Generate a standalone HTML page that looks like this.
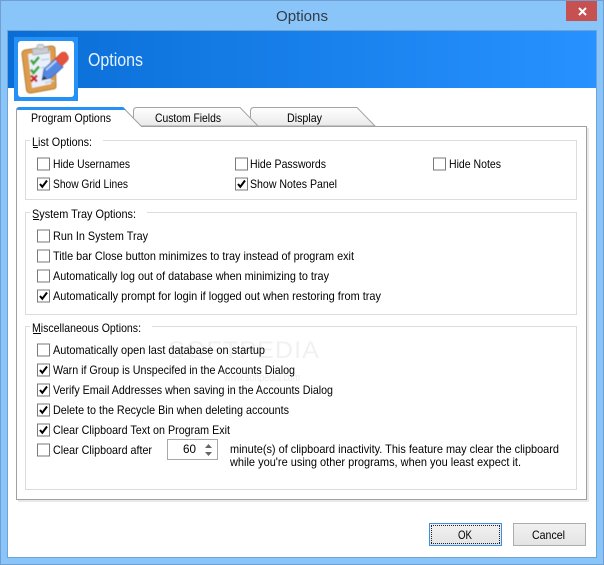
<!DOCTYPE html>
<html><head><meta charset="utf-8"><title>Options</title>
<style>
html,body{margin:0;padding:0;width:604px;height:565px;overflow:hidden;background:#8ac5fa}
svg{display:block;position:absolute;left:0;top:0}
text{font-family:"Liberation Sans",sans-serif;font-size:12px;fill:#000}
</style></head><body>
<svg width="604" height="565" viewBox="0 0 604 565" xmlns="http://www.w3.org/2000/svg">
<defs>
<linearGradient id="hd" x1="0" x2="1" y1="0" y2="0"><stop offset="0" stop-color="#096dd5"/><stop offset="1" stop-color="#2792ff"/></linearGradient>
<linearGradient id="tab" x1="0" x2="0" y1="0" y2="1"><stop offset="0" stop-color="#ffffff"/><stop offset="1" stop-color="#e9e9e9"/></linearGradient>
<linearGradient id="btn" x1="0" x2="0" y1="0" y2="1"><stop offset="0" stop-color="#f1f1f1"/><stop offset="1" stop-color="#e4e4e4"/></linearGradient>
<filter id="soft" x="-5%" y="-5%" width="110%" height="110%"><feGaussianBlur stdDeviation="0.45"/></filter>
<g id="cb"><rect x="0.5" y="0.5" width="12" height="12" fill="#fff" stroke="#7a7a7a"/></g>
<g id="ck"><rect x="0.5" y="0.5" width="12" height="12" fill="#fff" stroke="#7a7a7a"/><path d="M3 6.500L5.300 9.300L10 3" fill="none" stroke="#000" stroke-width="2"/></g>
</defs>
<!-- window -->
<rect x="0.5" y="0.5" width="603" height="564" fill="#8ac5fa" stroke="#6f9fd0"/>
<rect x="7" y="30" width="590" height="528" fill="#6ea3d6"/>
<rect x="8" y="31" width="588" height="526" fill="#fff"/>
<text x="276" y="21" style="font-size:15px;fill:#333b45" textLength="52" lengthAdjust="spacingAndGlyphs">Options</text>
<rect x="566" y="1" width="31" height="20" fill="#c75050"/>
<path d="M579 8l7 7M586 8l-7 7" stroke="#fff" stroke-width="2" fill="none"/>
<!-- header -->
<rect x="8" y="31" width="588" height="57" fill="url(#hd)"/>
<rect x="14" y="37" width="64" height="64" fill="#2590f5"/>
<rect x="18" y="41" width="56" height="56" rx="3" fill="#fff"/>
<!-- icon -->
<g filter="url(#soft)">
<path d="M25 50L51 46Q55 46 55 49L56 86Q56 89 53 89L31 93Q27 93 26.500 90L22 54Q22 51 25 50Z" fill="#dd9c48" stroke="#b57a30" stroke-width="1"/>
<path d="M28 54L50 51L51 84L32 88Z" fill="#e9f0fb"/>
<path d="M32 49L48 47L49 53L33 55Z" fill="#c9ccd1" stroke="#9a9ea5" stroke-width=".7"/>
<rect x="37" y="44.500" width="7" height="4.500" rx="2" fill="#d6d8dc" stroke="#9a9ea5" stroke-width=".7"/>
<path d="M31 60L33.500 63.500L39 57" fill="none" stroke="#3da83a" stroke-width="2.600"/>
<path d="M31 69.500L33.500 73L39 66.500" fill="none" stroke="#3da83a" stroke-width="2.600"/>
<path d="M31 75.500L37 81.500M37 75.500L31 81.500" fill="none" stroke="#c9282a" stroke-width="2.400"/>
<path d="M41 60L49 59M41 68L45 67" stroke="#a9c0e6" stroke-width="1"/>
<path d="M44 69L55 59L63 67L51 78L42 80Z" fill="#5287e0" stroke="#2f5fb0" stroke-width=".8"/>
<path d="M46 70L57 60" stroke="#b4d0f8" stroke-width="2"/>
<path d="M44 76L42 80L47 79Z" fill="#333"/>
<path d="M44 82L52 80L55 81L46 84Z" fill="#cfd6e2"/>
<path d="M55 59L61 53Q64 51 66 53L68 56Q69 59 67 61L62 66Z" fill="#e6533c" stroke="#c23a25" stroke-width=".6"/>
</g>
<text x="88" y="66" style="font-size:18px;fill:#e6f2ff" textLength="55" lengthAdjust="spacingAndGlyphs">Options</text>
<!-- panel shadow -->
<rect x="18" y="128" width="571" height="374" fill="#e9e9e9"/>
<!-- tabs -->
<path d="M250.500 126V111Q250.500 107.500 254 107.500H357L375 126Z" fill="url(#tab)" stroke="#a3a3a3"/>
<path d="M133.500 126V111Q133.500 107.500 137 107.500H240L258 126Z" fill="url(#tab)" stroke="#a3a3a3"/>
<!-- panel -->
<rect x="16.500" y="126.500" width="570" height="373" fill="#fff" stroke="#a0a0a0"/>
<path d="M16.500 128V110Q16.500 107 19 107H123L141.500 126.500H141V128Z" fill="#fff"/>
<path d="M16.500 128V110Q16.500 107.500 19 107.500H123L141.500 126.500" fill="none" stroke="#a0a0a0"/>
<path d="M17 110Q17 107 19.500 107H123L126 110Z" fill="#2590f5"/>
<text x="31" y="122" textLength="80" lengthAdjust="spacingAndGlyphs">Program Options</text>
<text x="155" y="122" textLength="66" lengthAdjust="spacingAndGlyphs">Custom Fields</text>
<text x="287" y="122" textLength="35" lengthAdjust="spacingAndGlyphs">Display</text>
<!-- groups -->
<g fill="none" stroke="#dcdcdc">
<rect x="25.500" y="140.500" width="551" height="59"/>
<rect x="25.500" y="212.500" width="551" height="102"/>
<rect x="25.500" y="326.500" width="551" height="163"/>
</g>
<rect x="30" y="135" width="73" height="12" fill="#fff"/>
<rect x="30" y="207" width="117" height="12" fill="#fff"/>
<rect x="30" y="321" width="122" height="12" fill="#fff"/>
<text x="32" y="146" textLength="60" lengthAdjust="spacingAndGlyphs">List Options:</text>
<path d="M33 147.500H38" stroke="#000"/>
<text x="32" y="218" textLength="104" lengthAdjust="spacingAndGlyphs">System Tray Options:</text>
<path d="M33 219.500H39" stroke="#000"/>
<text x="32" y="332" textLength="109" lengthAdjust="spacingAndGlyphs">Miscellaneous Options:</text>
<path d="M33 333.500H41" stroke="#000"/>
<!-- watermark -->
<text x="168" y="358" style="font-size:24px;fill:#f1f1f1;letter-spacing:1px" textLength="152" lengthAdjust="spacingAndGlyphs">SOFTPEDIA</text>
<text x="224" y="381" style="font-size:11px;fill:#ececec" textLength="76" lengthAdjust="spacingAndGlyphs">www.softpedia.com</text>
<!-- list options -->
<use href="#cb" x="37" y="157.500"/><text x="53" y="168" textLength="77" lengthAdjust="spacingAndGlyphs">Hide Usernames</text>
<use href="#cb" x="235" y="157.500"/><text x="250" y="168" textLength="76" lengthAdjust="spacingAndGlyphs">Hide Passwords</text>
<use href="#cb" x="433" y="157.500"/><text x="449" y="168" textLength="52" lengthAdjust="spacingAndGlyphs">Hide Notes</text>
<use href="#ck" x="37" y="177.500"/><text x="53" y="188" textLength="75" lengthAdjust="spacingAndGlyphs">Show Grid Lines</text>
<use href="#ck" x="235" y="177.500"/><text x="250" y="188" textLength="87" lengthAdjust="spacingAndGlyphs">Show Notes Panel</text>
<!-- tray -->
<use href="#cb" x="37" y="229.500"/><text x="53" y="240" textLength="95" lengthAdjust="spacingAndGlyphs">Run In System Tray</text>
<use href="#cb" x="37" y="249.500"/><text x="53" y="260" textLength="301" lengthAdjust="spacingAndGlyphs">Title bar Close button minimizes to tray instead of program exit</text>
<use href="#cb" x="37" y="269.500"/><text x="53" y="280" textLength="276" lengthAdjust="spacingAndGlyphs">Automatically log out of database when minimizing to tray</text>
<use href="#ck" x="37" y="289.500"/><text x="53" y="300" textLength="328" lengthAdjust="spacingAndGlyphs">Automatically prompt for login if logged out when restoring from tray</text>
<!-- misc -->
<use href="#cb" x="37" y="343.500"/><text x="53" y="354" textLength="212" lengthAdjust="spacingAndGlyphs">Automatically open last database on startup</text>
<use href="#ck" x="37" y="363.500"/><text x="53" y="374" textLength="242" lengthAdjust="spacingAndGlyphs">Warn if Group is Unspecifed in the Accounts Dialog</text>
<use href="#ck" x="37" y="383.500"/><text x="53" y="394" textLength="280" lengthAdjust="spacingAndGlyphs">Verify Email Addresses when saving in the Accounts Dialog</text>
<use href="#ck" x="37" y="403.500"/><text x="53" y="414" textLength="236" lengthAdjust="spacingAndGlyphs">Delete to the Recycle Bin when deleting accounts</text>
<use href="#ck" x="37" y="423.500"/><text x="53" y="434" textLength="177" lengthAdjust="spacingAndGlyphs">Clear Clipboard Text on Program Exit</text>
<use href="#cb" x="37" y="443.500"/><text x="53" y="454" textLength="99" lengthAdjust="spacingAndGlyphs">Clear Clipboard after</text>
<!-- spinner -->
<rect x="167.500" y="439.500" width="50" height="20" fill="#fff" stroke="#a8a8a8"/>
<text x="183" y="453" textLength="13" lengthAdjust="spacingAndGlyphs">60</text>
<path d="M205 448L208.500 444L212 448Z M205 452L208.500 456L212 452Z" fill="#666"/>
<text x="230" y="453" textLength="329" lengthAdjust="spacingAndGlyphs">minute(s) of clipboard inactivity. This feature may clear the clipboard</text>
<text x="230" y="466" textLength="291" lengthAdjust="spacingAndGlyphs">while you're using other programs, when you least expect it.</text>
<!-- buttons -->
<rect x="429.500" y="523.500" width="72" height="22" fill="url(#btn)" stroke="#3c8fe6"/>
<path d="M431 525.500H500M431 543.500H500M431.500 526V543M499.500 526V543" fill="none" stroke="#222" stroke-dasharray="1 1" shape-rendering="crispEdges"/>
<text x="458" y="539" textLength="14" lengthAdjust="spacingAndGlyphs">OK</text>
<rect x="513.500" y="523.500" width="72" height="22" fill="url(#btn)" stroke="#acacac"/>
<text x="532" y="539" textLength="33" lengthAdjust="spacingAndGlyphs">Cancel</text>
</svg>
</body></html>
